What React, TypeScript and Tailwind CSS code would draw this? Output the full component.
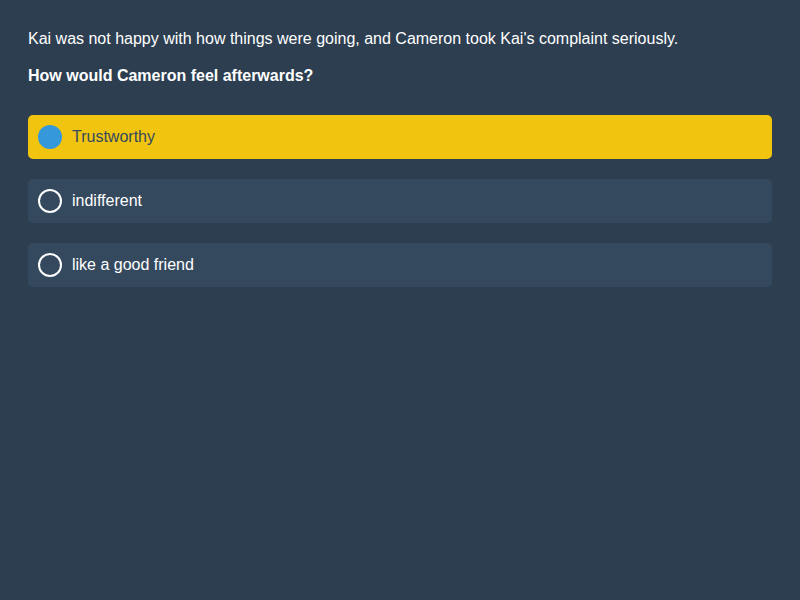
import React, { useState } from "react";

const options = ["Trustworthy", "indifferent", "like a good friend"];

export default function App() {
  const [selected, setSelected] = useState(0);

  return (
    <div
      className="min-h-[600px] w-full bg-[#2c3e50] px-7 pt-[29px] pb-7 text-white"
      style={{ fontFamily: '"Liberation Sans", Arial, sans-serif' }}
    >
      <p className="text-base leading-[19px]">
        Kai was not happy with how things were going, and Cameron took Kai's complaint seriously.
      </p>
      <p className="mt-[18px] text-base font-bold leading-[19px]">
        How would Cameron feel afterwards?
      </p>
      <div className="mt-[30px] flex flex-col gap-5">
        {options.map((opt, i) => {
          const active = i === selected;
          return (
            <button
              key={opt}
              type="button"
              onClick={() => setSelected(i)}
              className={
                active
                  ? "flex h-11 w-full items-center gap-[10px] rounded-[5px] bg-[#f1c40f] px-[10px] text-left text-base text-[#34495e]"
                  : "flex h-11 w-full items-center gap-[10px] rounded-[5px] bg-[#34495e] px-[10px] text-left text-base text-white"
              }
            >
              {active ? (
                <span className="h-6 w-6 shrink-0 rounded-full bg-[#3498db]" />
              ) : (
                <span className="h-6 w-6 shrink-0 rounded-full border-2 border-white" />
              )}
              <span>{opt}</span>
            </button>
          );
        })}
      </div>
    </div>
  );
}
